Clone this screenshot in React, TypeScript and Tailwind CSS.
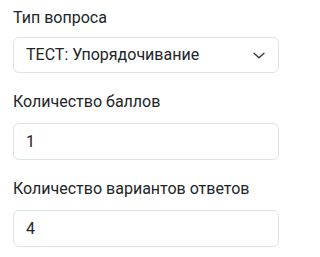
import React from "react";

export default function App() {
  return (
    <div className="w-[292px] h-[257px] bg-white px-[13px] pt-[6px] text-[#212529]" style={{ fontFamily: "Roboto, 'Noto Sans', sans-serif" }}>
      <div className="flex flex-col">
        <label className="text-[16px] leading-[24px] mb-[7px]">Тип вопроса</label>
        <div className="h-[36px] w-full border border-[#dee2e6] rounded-[6px] flex items-center justify-between pl-3 pr-[13px]">
          <span className="text-[16px] leading-[24px]">ТЕСТ: Упорядочивание</span>
          <svg width="12" height="7" viewBox="0 0 12 7" fill="none">
            <path d="M1 1.2 L6 5.8 L11 1.2" stroke="#343a40" strokeWidth="1.4" strokeLinecap="round" strokeLinejoin="round" />
          </svg>
        </div>
      </div>
      <div className="flex flex-col mt-[17px]">
        <label className="text-[16px] leading-[24px] mb-[9px]">Количество баллов</label>
        <div className="h-[37px] w-full border border-[#dee2e6] rounded-[6px] flex items-center px-3">
          <span className="text-[16px] leading-[24px]">1</span>
        </div>
      </div>
      <div className="flex flex-col mt-[17px]">
        <label className="text-[16px] leading-[24px] mb-[9px]">Количество вариантов ответов</label>
        <div className="h-[37px] w-full border border-[#dee2e6] rounded-[6px] flex items-center px-3">
          <span className="text-[16px] leading-[24px]">4</span>
        </div>
      </div>
    </div>
  );
}
